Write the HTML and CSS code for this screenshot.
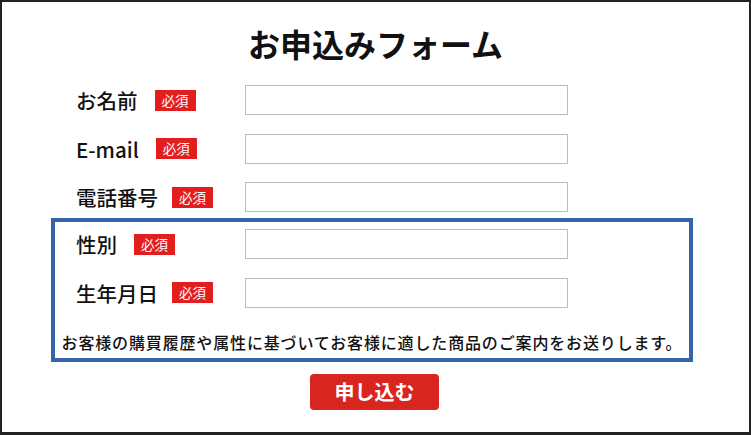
FILE: index.html
```html
<!DOCTYPE html>
<html lang="ja">
<head>
<meta charset="utf-8">
<title>お申込みフォーム</title>
<link rel="stylesheet" href="styles.css">
</head>
<body>
<div class="frame">
  <h1 class="title">お申込みフォーム</h1>
  <form class="form">
    <div class="rows">
      <div class="row">
        <div class="label"><span class="label-text">お名前</span><span class="badge">必須</span></div>
        <input class="field" type="text">
      </div>
      <div class="row">
        <div class="label"><span class="label-text">E-mail</span><span class="badge">必須</span></div>
        <input class="field" type="text">
      </div>
      <div class="row">
        <div class="label"><span class="label-text">電話番号</span><span class="badge badge-tight">必須</span></div>
        <input class="field" type="text">
      </div>
    </div>
    <div class="highlight">
      <div class="rows">
        <div class="row">
          <div class="label"><span class="label-text">性別</span><span class="badge">必須</span></div>
          <input class="field" type="text">
        </div>
        <div class="row">
          <div class="label"><span class="label-text">生年月日</span><span class="badge badge-tight">必須</span></div>
          <input class="field" type="text">
        </div>
      </div>
      <p class="note">お客様の購買履歴や属性に基づいてお客様に適した商品のご案内をお送りします。</p>
    </div>
    <div class="actions">
      <button class="submit" type="button">申し込む</button>
    </div>
  </form>
</div>
</body>
</html>
```

FILE: styles.css
```css
* { box-sizing: border-box; }
html, body { margin: 0; padding: 0; background: #fff; }
body {
  font-family: "Noto Sans CJK JP", "Noto Sans", sans-serif;
  color: #111;
}
.frame {
  width: 751px;
  height: 435px;
  border: 2px solid #222;
  border-bottom-width: 3px;
  padding-top: 21px;
}
.title {
  margin: 0;
  text-align: center;
  font-size: 32px;
  line-height: 40px;
  font-weight: 700;
}
.form {
  margin-top: 22px;
}
.rows {
  display: flex;
  flex-direction: column;
  gap: 18.5px;
}
.row {
  display: flex;
  align-items: center;
  padding-left: 74px;
  height: 30px;
}
.label {
  width: 169px;
  display: flex;
  align-items: center;
  gap: 17px;
}
.label-text {
  font-size: 20.5px;
  font-weight: 500;
  line-height: 30px;
}
.badge {
  display: inline-block;
  width: 41px;
  height: 21px;
  line-height: 21px;
  text-align: center;
  background: #e21e1e;
  color: #fff;
  font-size: 13.5px;
  font-weight: 400;
}
.badge-tight { margin-left: -3px; }
.field {
  width: 323px;
  height: 30px;
  border: 1.5px solid #bcbcbc;
  background: #fff;
  margin: 0;
  padding: 0;
}
.rows + .highlight { margin-top: 6px; }
.highlight {
  margin-left: 49px;
  width: 642px;
  border: 4px solid #3565a9;
  padding-top: 7px;
  padding-bottom: 4px;
}
.highlight .row { padding-left: 21px; }
.note {
  margin: 22px 0 0;
  text-align: center;
  font-size: 16px;
  letter-spacing: 0.85px;
  line-height: 24px;
  font-weight: 500;
}
.actions {
  display: flex;
  justify-content: center;
  margin-top: 12px;
}
.submit {
  width: 129px;
  height: 36px;
  border: none;
  border-radius: 4px;
  background: #d9251f;
  color: #fff;
  font-family: "Noto Sans CJK JP", "Noto Sans", sans-serif;
  font-size: 20px;
  font-weight: 700;
  line-height: 36px;
  padding: 0;
  margin-left: -2px;
}
```
